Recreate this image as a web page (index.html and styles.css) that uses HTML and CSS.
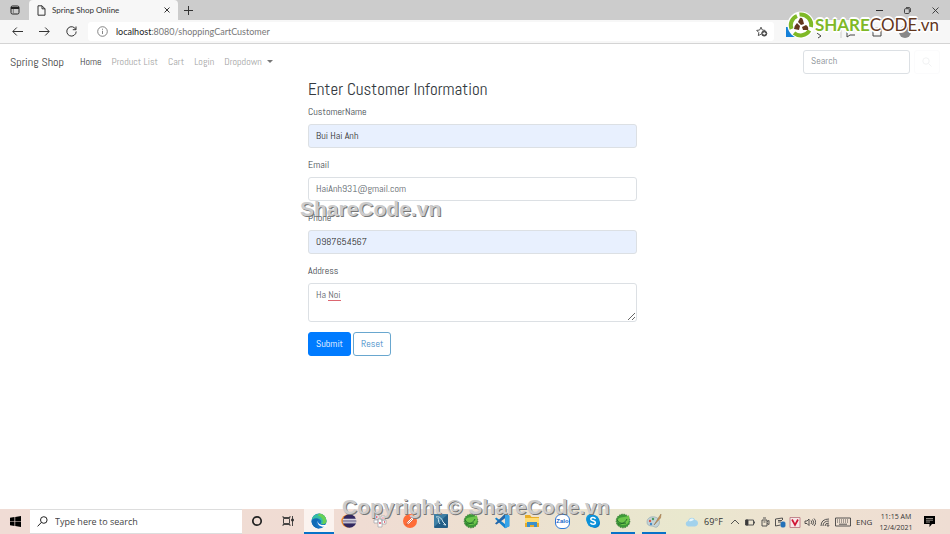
FILE: index.html
```html
<!DOCTYPE html>
<html lang="en">
<head>
<meta charset="utf-8">
<title>Spring Shop Online</title>
<link rel="stylesheet" href="styles.css">
</head>
<body>
<div class="tabstrip">
  <button class="tab-actions" aria-label="Tab actions"><svg width="10" height="10" viewBox="0 0 10 10"><rect x="1" y="1" width="8" height="8" rx="1.5" fill="none" stroke="#222"/><path d="M1 2h8v2H1z" fill="#222"/><path d="M3.3 4v5" stroke="#777"/></svg></button>
  <div class="tab">
    <svg width="9" height="11" viewBox="0 0 9 11" fill="none" stroke="#333"><path d="M1 .8h4l3 3v6.4H1zM5 .8v3h3"/></svg>
    <span class="tab-title">Spring Shop Online</span>
    <button class="tab-close" aria-label="Close tab"><svg width="6" height="6" viewBox="0 0 6 6" stroke="#333"><path d="M.5.5l5 5M5.5.5l-5 5"/></svg></button>
  </div>
  <button class="tab-new" aria-label="New tab"><svg width="9" height="9" viewBox="0 0 9 9" stroke="#333"><path d="M4.5 0v9M0 4.5h9"/></svg></button>
  <div class="window-controls">
    <button aria-label="Minimize"><svg width="7" height="7" viewBox="0 0 7 7" stroke="#333"><path d="M0 3.5h7"/></svg></button>
    <button aria-label="Restore"><svg width="7" height="7" viewBox="0 0 7 7" fill="none" stroke="#333" stroke-width=".9"><rect x=".5" y="1.7" width="4.8" height="4.8" rx="1"/><path d="M2 .6h3q1.4 0 1.4 1.4v3"/></svg></button>
    <button aria-label="Close"><svg width="7" height="7" viewBox="0 0 7 7" stroke="#333" stroke-width=".9"><path d="M.5.5l6 6M6.5.5l-6 6"/></svg></button>
  </div>
</div>
<div class="toolbar">
  <button class="tool" aria-label="Back"><svg width="11" height="9" viewBox="0 0 11 9" fill="none" stroke="#333"><path d="M11 4.5H1M4.8.5l-4 4 4 4"/></svg></button>
  <button class="tool" aria-label="Forward"><svg width="11" height="9" viewBox="0 0 11 9" fill="none" stroke="#333"><path d="M0 4.5h10M6.200.5l4 4-4 4"/></svg></button>
  <button class="tool" aria-label="Refresh"><svg width="11" height="11" viewBox="0 0 11 11" fill="none" stroke="#333"><path d="M9.800 3.500A4.700 4.700 0 1 0 10.200 5.500M10 .5v3.200H6.800"/></svg></button>
  <div class="address">
    <svg width="11" height="11" viewBox="0 0 11 11" fill="none" stroke="#777" stroke-width=".9"><circle cx="5.500" cy="5.500" r="4.800"/><path d="M5.500 4.800v3.200M5.500 2.700v1.100"/></svg>
    <span class="url"><b>localhost</b>:8080/shoppingCartCustomer</span>
    <svg class="star" width="12" height="11" viewBox="0 0 12 11" fill="none" stroke="#444" stroke-width=".9"><path d="M5 8.200L2.300 9.600l.5-3L.7 4.400l3-.4L5 1.200 6.300 4l3 .4"/><circle cx="8.200" cy="7.500" r="2.600" fill="#555"/><path d="M8.200 6v3M6.700 7.500h3" stroke="#fff"/></svg>
  </div>
  <div class="extensions">
    <svg width="126" height="16" viewBox="0 0 126 16" fill="none" stroke="#444"><path d="M0 3h9v10H0z" fill="#1580d8" stroke="none"/><path d="M31 9l4 3-3 2M61 4v9l3-2h5M87 4v8h8V4z"/><path d="M55 2v12" stroke="#ccc"/><circle cx="119" cy="8" r="6" fill="#888" stroke="none"/></svg>
  </div>
</div>
<nav class="navbar">
  <a class="brand" href="#">Spring Shop</a>
  <a class="nav-link active" href="#">Home</a>
  <a class="nav-link" href="#">Product List</a>
  <a class="nav-link" href="#">Cart</a>
  <a class="nav-link" href="#">Login</a>
  <a class="nav-link dropdown" href="#">Dropdown</a>
  <form class="search">
    <input class="control" type="text" placeholder="Search" aria-label="Search">
    <button class="search-button" type="button" aria-label="Search"><svg width="10" height="10" viewBox="0 0 10 10" fill="none" stroke="#f1f2f3"><circle cx="4" cy="4" r="3.200"/><path d="M6.500 6.500L9.500 9.500"/></svg></button>
  </form>
</nav>
<main class="page">
  <form class="customer">
    <h1>Enter Customer Information</h1>
    <label for="name">CustomerName</label>
    <input class="control filled" id="name" type="text" value="Bui Hai Anh">
    <label for="email">Email</label>
    <input class="control" id="email" type="text" value="HaiAnh931@gmail.com">
    <label for="phone">Phone</label>
    <input class="control filled" id="phone" type="text" value="0987654567">
    <label for="address">Address</label>
    <div class="address-field">
      <textarea class="control" id="address">Ha Noi</textarea>
      <span class="spelling" aria-hidden="true"></span>
    </div>
    <div class="actions">
      <button class="btn primary" type="button">Submit</button>
      <button class="btn outline" type="reset">Reset</button>
    </div>
  </form>
</main>
<footer class="taskbar">
  <button class="start" aria-label="Start"><svg width="11" height="11" viewBox="0 0 11 11"><path d="M0 1.700L4.500 1v4.200H0zM5.200.9L11 0v5.200H5.200zM0 5.800h4.500V10L0 9.300zM5.200 5.800H11V11l-5.800-.9z"/></svg></button>
  <label class="task-search"><svg width="11" height="11" viewBox="0 0 11 11" fill="none" stroke="#222"><circle cx="6.800" cy="4" r="3.300"/><path d="M4.400 6.400L.6 10.400"/></svg><input type="text" placeholder="Type here to search" aria-label="Type here to search"></label>
  <div class="apps">
    <button aria-label="Cortana"><svg width="16" height="16" viewBox="0 0 16 16"><circle cx="8" cy="8" r="4.200" fill="none" stroke="#222" stroke-width="1.700"/></svg></button>
    <button aria-label="Task view"><svg width="16" height="16" viewBox="0 0 16 16" fill="none" stroke="#333" stroke-width=".9"><path d="M3.500 5.500h6v5h-6zM3 3v1.500h7V3M3 13v-1.500h7V13M12.500 3v10"/><path d="M11.700 6h1.600v2h-1.600z" fill="#333"/></svg></button>
    <button class="current" aria-label="Edge"><svg width="16" height="16" viewBox="0 0 16 16"><circle cx="8" cy="8" r="7.500" fill="#1673c5"/><path d="M.6 7A7.500 7.500 0 0 1 15.500 8c0 3-2.400 3.500-4.500 3.200-1.500-.2-1.600-.8-1-1.700C11 7.500 8.500 5.500 5.500 5.500 3 5.500 1.200 6.200.6 7z" fill="#36bda2"/><path d="M8 .5A7.500 7.500 0 0 1 15.500 8c0 3-3 3.500-4.500 3 2-2.500.8-6.500-4-8.500z" fill="#68cf55"/><path d="M7 7.500c-.6 2 1 5 6.500 4.500 1-.1 1.500-.5 1.500-.5l.8 2-2.500.3C9 14 5.500 11 7 7.500z" fill="#fff"/><path d="M5.500 5.500C2 5.500.5 7.500.5 8.500 1 13 5 15.500 8.500 15.500 5 14 3.500 9 7.200 7c1.200-.6-.7-1.500-1.700-1.500z" fill="#126bb5"/></svg></button>
    <button aria-label="Eclipse"><svg width="16" height="16" viewBox="0 0 16 16"><circle cx="6.800" cy="8" r="6.500" fill="#f28b28"/><circle cx="8.500" cy="8" r="6.800" fill="#32285f"/><path d="M2 6.300h13M1.700 8h13.500M2 9.800h13" stroke="#fff"/></svg></button>
    <button aria-label="Git client"><svg width="16" height="16" viewBox="0 0 16 16" fill="#fff" stroke="#a0a0a6" stroke-width=".7"><path d="M2 2h5v4H2zM9 3h4v4H9zM6 6h4v8H6zM10 7h4v4h-4zM2 7h4v3H2z"/><path d="M4 4h1.500M10.500 5h1M8 9v2M12 9h1" stroke="#e0445a" stroke-width="1.400"/></svg></button>
    <button aria-label="Postman"><svg width="16" height="16" viewBox="0 0 16 16"><circle cx="8" cy="8" r="7" fill="#ff6c37"/><path d="M4 12l1-3 5-5 2 2-5 5zM4 12l6-6" fill="#fff" stroke="#d6532b" stroke-width=".7"/></svg></button>
    <button aria-label="MySQL Workbench"><svg width="16" height="16" viewBox="0 0 16 16"><rect x="1" y="1" width="14" height="14" rx="1" fill="#245e86"/><path d="M1 1h14L1 14z" fill="#3f80a5"/><path d="M3 4c4-1 6 2 7 5l3 3-2.500-.5M5 5c1 2 0 4 2 6" fill="none" stroke="#d3e7ef"/></svg></button>
    <button aria-label="Spring Tool Suite"><svg width="16" height="16" viewBox="0 0 16 16"><use href="#spring"/></svg></button>
    <button aria-label="Visual Studio Code"><svg width="16" height="16" viewBox="0 0 16 16"><path d="M11 .8L15.300 2.800v10.400L11 15.200 1 5.800l1.300-1.300L11 11z" fill="#1682cc"/><path d="M11 .8v4.400L2.500 11.600 1 10.400z" fill="#2467a9"/><path d="M11 .8l4.300 2v10.400l-4.300 2z" fill="#37a4e8"/></svg></button>
    <button aria-label="File Explorer"><svg width="16" height="16" viewBox="0 0 16 16"><path d="M1 2h5l1.500 2H15v10H1z" fill="#e8ad29"/><path d="M1 5h14v5H1z" fill="#ffdc73"/><path d="M3 9h10v5h-3v-2H6v2H3z" fill="#3b91ca"/></svg></button>
    <button aria-label="Zalo" class="zalo"><span>Zalo</span></button>
    <button aria-label="Skype"><svg width="16" height="16" viewBox="0 0 16 16"><circle cx="6" cy="6" r="5" fill="#159bdc"/><circle cx="10" cy="10" r="5" fill="#087dca"/><circle cx="8" cy="8" r="6.300" fill="#0c91d9"/><path d="M10.500 5.800C9.500 4 5.700 4.200 5.800 6.200c.1 2.100 4.700 1.200 4.600 3.500-.1 2-4 2.100-5 0" fill="none" stroke="#fff" stroke-width="1.500"/></svg></button>
    <button class="running" aria-label="Spring Tool Suite running"><svg width="16" height="16" viewBox="0 0 16 16"><g id="spring"><circle cx="8" cy="8" r="6.800" fill="#3d9938" stroke="#397934" stroke-dasharray="1.500 1"/><path d="M3 6c4-3 8-1 11-4 1 7-1 10-6 10-3 0-5-2-5-6z" fill="#6dc64b"/><path d="M3 11c4 0 7-1 9-5M2 7c2 3 5 4 9 3" fill="none" stroke="#226e2b"/></g></svg></button>
    <button class="running" aria-label="Paint"><svg width="16" height="16" viewBox="0 0 16 16"><path d="M1 9c0-4 4-6 8-5 5 1 6 7 2 10-2 1-3-1-5-1-3 0-5-1-5-4z" fill="#c4d4d7" stroke="#8ca3ae" stroke-width=".6"/><circle cx="4" cy="8" r="1.200" fill="#d45749"/><circle cx="7" cy="6" r="1.200" fill="#4c9b61"/><circle cx="5" cy="11" r="1.200" fill="#468bc5"/><path d="M8 12l5-8 2-3-.5 4z" fill="#cf9553" stroke="#8d6c49" stroke-width=".5"/></svg></button>
  </div>
  <div class="tray">
    <svg width="14" height="12" viewBox="0 0 14 12"><path d="M3 10.500a2.800 2.800 0 0 1 0-5.500C4 1 9 .5 10 4c4 .2 4 6 0 6.500z" fill="#a2d2ec"/><path d="M4 5c1-3 4-3 5-1-2 0-2 2-5 1z" fill="#e7f6fc"/></svg>
    <span class="temperature">69°F</span>
    <div class="tray-icons">
      <svg width="12" height="12" viewBox="0 0 12 12"><path d="M2 8l4-4 4 4"/></svg>
      <svg width="12" height="12" viewBox="0 0 12 12"><path d="M1.500 4h8v5h-8zM10.500 5.500v2"/><path d="M2 4h2v5H2z" fill="#333"/></svg>
      <svg width="12" height="12" viewBox="0 0 12 12"><path d="M3 4h5v6H3zM4 2h3M8 5.500l2-1v4l-2-1M4.500 6h2"/></svg>
      <svg width="12" height="12" viewBox="0 0 12 12"><path d="M1.500 3l7-1v2M1.500 3v7l5-1M4 6h3M4 4.500h4"/><rect x="7" y="6" width="4" height="5" rx="1" fill="#2371b8" stroke="#2371b8"/></svg>
      <svg width="12" height="12" viewBox="0 0 12 12"><path d="M1 1.500h10v10H1z" fill="#f7e6e7" stroke="#bb7c85"/><path d="M3 3.500L6 9l3-5.500" stroke="#d01435" stroke-width="1.700"/></svg>
      <svg width="12" height="12" viewBox="0 0 12 12"><path d="M1 5h2l2-2v6.500l-2-2H1zM7 4.500q1.500 1.700 0 3.500M8.500 3.500q2.500 2.700 0 5.500M10 2.500q3.500 3.700 0 7.500"/></svg>
      <svg width="12" height="12" viewBox="0 0 12 12"><path d="M2 10Q2 3 10 3M4 10Q4 5 10 5M6 10Q6 7 10 7"/><circle cx="9" cy="9.500" r=".8"/></svg>
    </div>
    <svg width="16" height="10" viewBox="0 0 16 10" fill="none" stroke="#444" stroke-width=".9"><path d="M.5 1h15v8H.5z"/><path d="M2 3h12M2 5h12" stroke-dasharray="1 1"/><path d="M4 7.200h8"/></svg>
    <span class="language">ENG</span>
    <div class="clock"><span>11:15 AM</span><span>12/4/2021</span></div>
    <svg class="notify" width="11" height="11" viewBox="0 0 11 11"><path d="M0 0h11v8H8L5.500 11V8H0z"/><path d="M2 2.500h7M2 4.200h7M2 6h4" stroke="#cfc6bc" stroke-width=".7"/></svg>
  </div>
</footer>
<div class="logo">
  <svg width="28" height="28" viewBox="0 0 28 28"><circle cx="14" cy="14" r="13.500" fill="#fff"/><g fill="none" stroke="#7fb927" stroke-width="4"><path d="M4.500 18A10 10 0 0 1 10 5"/><path d="M12.500 3.500A10.500 10.500 0 0 1 24 16"/><path d="M22.500 19.500A10.500 10.500 0 0 1 7 22"/></g><g fill="#63371d"><path d="M13 7q2-1 3 2l1 4-3 1-3-3z"/><path d="M7 18q0-3 3-6l3 3-1 4z"/><path d="M15 16l4-2q3 2 2 5l-5 0z"/></g></svg>
  <span><b>SHARE</b>CODE.vn</span>
</div>
<div class="watermark middle">ShareCode.vn</div>
<div class="watermark bottom">Copyright © ShareCode.vn</div>
</body>
</html>
```

FILE: styles.css
```css
* { box-sizing: border-box; }
body {
  margin: 0;
  min-height: 100vh;
  display: flex;
  flex-direction: column;
  position: relative;
  overflow: hidden;
  background: #fff;
  color: #444a50;
  font: 10px/16px "Abel", "Liberation Sans Narrow", "Roboto Condensed", Roboto, sans-serif;
}
button, input, textarea { font: inherit; color: inherit; margin: 0; }
button { border: 0; padding: 0; background: none; display: flex; align-items: center; justify-content: center; }
svg { display: block; flex: none; }
a { text-decoration: none; }

.tabstrip { height: 20px; display: flex; background: #ccc; font: 8px/20px Lato, sans-serif; color: #333; }
.tab-actions { width: 29px; }
.tab { width: 149px; display: flex; align-items: center; padding: 0 8px; gap: 6px; background: #f7f7f7; border-radius: 4px 4px 0 0; }
.tab-title { flex: 1; white-space: nowrap; }
.tab-new { width: 21px; }
.window-controls { margin-left: auto; display: flex; padding-right: 1px; }
.window-controls button { width: 28px; }

.toolbar { height: 24px; display: flex; align-items: center; padding-left: 4px; background: #f7f7f7; border-bottom: 1px solid #d4d4d4; }
.tool { width: 27px; }
.address { flex: 1; height: 19px; display: flex; align-items: center; gap: 8px; margin-left: 3px; padding: 0 6px 0 9px; background: #fff; border-radius: 3px; color: #777; font: 9px/18px Lato, sans-serif; }
.url b { font-weight: 400; color: #222; }
.star { margin-left: auto; }
.extensions { width: 176px; padding-left: 12px; }

.navbar { height: 35px; display: flex; align-items: center; gap: 10px; padding: 0 10px; }
.brand { font-size: 12px; color: #444; margin-right: 6px; }
.nav-link { color: #a4a4a4; }
.nav-link.active { color: #444; }
.dropdown { display: flex; align-items: center; gap: 5px; }
.dropdown::after { content: ""; border: 3px solid transparent; border-top-color: #777; border-bottom: 0; }
.search { margin-left: auto; display: flex; gap: 4px; }
.search .control { width: 107px; }
.search-button { width: 26px; border: 1px solid #fbfbfc; border-radius: 3px; }

.control { display: block; width: 100%; height: 24px; padding: 2px 7px 4px; border: 1px solid #dce0e4; border-radius: 3px; background: #fff; color: #60666c; outline: 0; }
.control::placeholder { color: #858b91; opacity: 1; }
.control.filled { background: #e8f0fe; color: #333; }
.page { flex: 1; padding-right: 5px; }
.customer { width: 34.8%; margin: 0 auto; }
h1 { margin: 0 0 5px; font-size: 17px; line-height: 20px; font-weight: 400; color: #343a40; white-space: nowrap; }
label { display: block; }
.customer label { margin-bottom: 4px; }
.customer .control { margin-bottom: 9px; }
.address-field { position: relative; }
.customer textarea.control { height: 39px; margin-bottom: 10px; padding-top: 3px; resize: vertical; overflow: hidden; }
.spelling { position: absolute; left: 20px; top: 17px; width: 13px; height: 1px; background: #dc6670; }
.actions { display: flex; gap: 2px; }
.btn { height: 24px; padding: 0 7px; border: 1px solid #007bff; border-radius: 3px; }
.btn.primary { background: #007bff; color: #fff; }
.btn.outline { border-color: #69a7cf; color: #3f8bc8; background: #fff; }

.taskbar { height: 25px; display: flex; background: linear-gradient(90deg, #f0dcd5 0, #f0dcd3 38%, #ece1d0 55%, #e9e8ce 72%, #eee1d1 84%, #efddd3 100%); font: 8px/11px "Open Sans", sans-serif; color: #333; }
.start { width: 30px; }
.task-search { width: 212px; display: flex; align-items: center; gap: 7px; padding: 0 7px; background: #fff; border: 1px solid #ddd; border-width: 1px 0; }
.task-search input { flex: 1; min-width: 0; border: 0; padding: 0; outline: 0; font-size: 9px; line-height: 16px; background: none; }
.task-search input::placeholder { color: #444; opacity: 1; }
.apps { display: grid; grid-template-columns: 30px 31px repeat(12, 30px); column-gap: 0; width: 427px; justify-content: space-between; }
.apps button { border-bottom: 2px solid transparent; border-top: 1px solid transparent; }
.apps .current { background: #fbf3ef; border-bottom-color: #0872c8; }
.apps .running { border-bottom-color: #0872c8; margin: 0 3px; }
.zalo span { width: 15px; height: 15px; border: 1px solid #2b78d7; border-radius: 6px; background: #fff; color: #1767c9; font: bold 6px/13px "Liberation Sans", sans-serif; }
.tray { margin-left: auto; display: flex; align-items: center; }
.temperature { margin-left: 5px; width: 25px; font-size: 9px; }
.tray-icons { display: flex; gap: 3px; margin-right: 4px; }
.tray-icons svg { fill: none; stroke: #444; stroke-width: 0.9; }
.language { margin-left: 5px; width: 23px; }
.clock { display: flex; flex-direction: column; width: 34px; text-align: center; font-size: 7px; white-space: nowrap; align-items: center; }
.notify { margin: 0 15px 0 11px; }

.logo { position: absolute; top: 11px; right: 11px; display: flex; align-items: center; color: #63371d; font: 17px/28px Lato, sans-serif; text-shadow: 1px 1px 0 #fff, -1px -1px 0 #fff, 1px -1px 0 #fff, -1px 1px 0 #fff, 0 2px 0 #fff, 0 -2px 0 #fff; }
.logo b { color: #7fb927; }
.watermark { position: absolute; color: #ccc; font: bold 21px/24px "Liberation Sans", sans-serif; text-shadow: 1px 1px 0 #777; white-space: nowrap; pointer-events: none; }
.middle { left: 300px; top: 197px; }
.bottom { left: 342px; top: 495px; }
```
